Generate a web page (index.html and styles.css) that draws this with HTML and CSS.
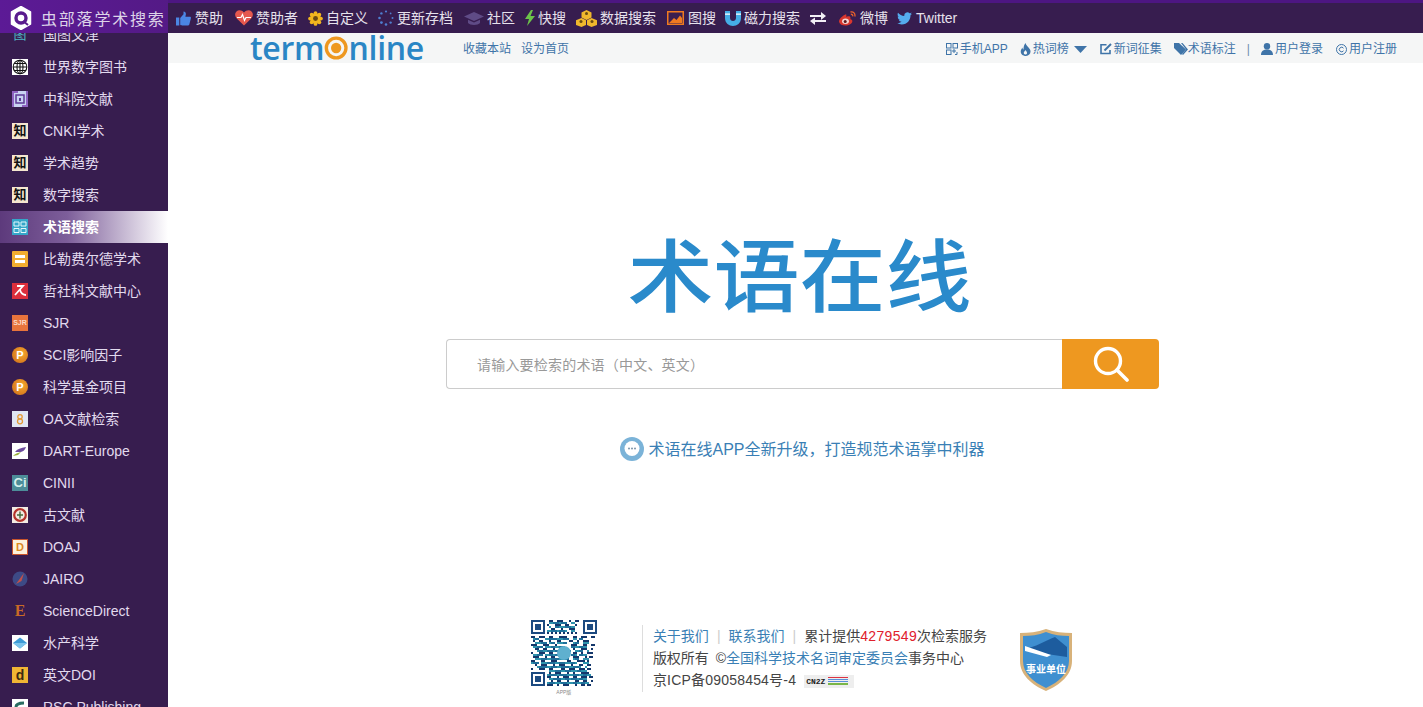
FILE: index.html
```html
<!DOCTYPE html>
<html lang="zh-CN">
<head>
<meta charset="utf-8">
<title>术语在线</title>
<link rel="stylesheet" href="styles.css">
</head>
<body>
<div class="page">
  <header class="topbar">
    <a class="brand">
      <svg class="brand-logo" width="22" height="24" viewBox="0 0 22 24"><path d="M11 0.5 20.5 6v12L11 23.5 1.5 18V6z" fill="#fff" stroke="#fff" stroke-width="1.5" stroke-linejoin="round"/><circle cx="11" cy="12" r="5" fill="none" stroke="#5a1c8e" stroke-width="3.4"/><path d="M13 15l5 4" stroke="#5a1c8e" stroke-width="2"/></svg>
      <span>虫部落学术搜索</span>
    </a>
    <nav class="topnav">
      <a class="wide mr2"><svg width="15" height="15" viewBox="0 0 16 16"><path fill="#4b86e4" d="M0 7h3.500v8.500H0zM4.500 7.500 8 3.500V0.500c1.800 0 2.600 1.400 2.600 2.800L10 6h4.700c1 0 1.500.9 1.200 1.800l-1.700 6.600c-.2.700-.8 1.100-1.500 1.100H6.500c-.8 0-2-.4-2-1z"/></svg>赞助</a>
      <a><svg width="18" height="16" viewBox="0 0 18 16"><path fill="#e5584e" d="M9 15.500 1.800 8.400C-.4 6.200-.3 3 1.500 1.400 3.400-.3 6.900-.1 9 2.600 11.100-.1 14.600-.3 16.500 1.400c1.800 1.600 1.900 4.800-.3 7z"/><path fill="none" stroke="#fff" stroke-width="1.200" d="M2 7.500h4l1.500-3 2 6 1.500-3h5"/></svg>赞助者</a>
      <a><svg width="15" height="15" viewBox="0 0 16 16"><circle cx="8" cy="8" r="5.800" fill="#f2b51e"/><g fill="#f2b51e"><circle cx="8" cy="2.200" r="2"/><circle cx="8" cy="13.800" r="2"/><circle cx="2.200" cy="8" r="2"/><circle cx="13.800" cy="8" r="2"/><circle cx="3.900" cy="3.900" r="2"/><circle cx="12.100" cy="3.900" r="2"/><circle cx="3.900" cy="12.100" r="2"/><circle cx="12.100" cy="12.100" r="2"/></g><circle cx="8" cy="8" r="2.600" fill="#6b4a12"/></svg>自定义</a>
      <a class="mr1"><svg width="16" height="16" viewBox="0 0 16 16" fill="#4f7fd0"><circle cx="8" cy="1.500" r="1.100"/><circle cx="12.600" cy="3.400" r=".9"/><circle cx="14.500" cy="8" r="1"/><circle cx="12.600" cy="12.600" r="1.200"/><circle cx="8" cy="14.500" r="1.300"/><circle cx="3.400" cy="12.600" r="1.400"/><circle cx="1.500" cy="8" r="1.300"/><circle cx="3.400" cy="3.400" r="1.200"/></svg>更新存档</a>
      <a><svg width="20" height="15" viewBox="0 0 20 15" fill="#5f4b86"><path d="M10 1 20 5.500 10 10 0 5.500z"/><path d="M4 8.800V12c2 2.500 10 2.500 12 0V8.800L10 11.500z"/></svg>社区</a>
      <a><svg width="10" height="16" viewBox="0 0 10 16"><path fill="#6cc24a" d="M6 0 0 9h4l-2 7 8-10H5.500L8 0z"/></svg>快搜</a>
      <a class="mr1"><svg width="21" height="17" viewBox="0 0 21 17" fill="#f0b82d"><path d="M10.500 0 15.500 2.500V7.500L10.500 10 5.500 7.500V2.500z"/><path d="M5.500 8 10 10.300V15L5.500 17 0 15V10.300z"/><path d="M15.500 8 21 10.300V15L15.500 17 11 15V10.300z"/><g fill="#6b4c10"><circle cx="10.500" cy="3.500" r="1.500"/><circle cx="5" cy="11.500" r="1.500"/><circle cx="16" cy="11.500" r="1.500"/></g></svg>数据搜索</a>
      <a class="wide ml-1"><svg width="17" height="14" viewBox="0 0 17 14"><rect x=".75" y=".75" width="15.500" height="12.500" fill="#3a1e50" stroke="#ef7a20" stroke-width="1.500"/><path fill="#ef7a20" d="M2 12 7 7l2.500 2L13 4.500l2 2.500v5z"/></svg>图搜</a>
      <a><svg width="16" height="16" viewBox="0 0 16 16"><path fill="#45ade6" d="M0 1h5v7c0 4 6 4 6 0V1h5v7c0 10.500-16 10.500-16 0z"/><path fill="#fff" d="M0 3.500h5v1.200H0zM11 3.500h5v1.200h-5z"/></svg>磁力搜索</a>
      <a class="mr3"><svg width="16" height="13" viewBox="0 0 16 13" fill="#f2eff5"><path d="M0 3h11V0l5 4-5 4V5H0zM16 8H5V5.500L0 9l5 4v-3h11z"/></svg></a>
      <a class="wide ml-1"><svg width="17" height="15" viewBox="0 0 17 15"><path fill="#d9362e" d="M6.500 3.500C3 5-.5 8.500.1 11c.7 3 5 4.200 8.800 3.200 3.500-.9 5.100-3.200 4.200-5-.4-.8-1.300-1-1.800-1.300.5-1.400 0-2.700-1.800-2.600-1 .1-1.900.5-2.300.5.500-1.700-.2-3-.7-2.300z"/><ellipse cx="6.500" cy="10.200" rx="3.400" ry="2.700" fill="#f3d6d4"/><circle cx="6.200" cy="10.400" r="1.500" fill="#5a1a20"/><path fill="none" stroke="#e8612d" stroke-width="1.300" d="M11.500 1c3-.8 5 1.800 4.300 4.500M11.800 3.300c1.300-.3 2.200.8 1.900 2"/></svg>微博</a>
      <a class="wide ml-1"><svg width="15" height="13" viewBox="0 0 24 20"><path fill="#55acee" transform="translate(0 -2.200)" d="M23.953 4.570a10 10 0 01-2.825.775 4.958 4.958 0 002.163-2.723c-.951.555-2.005.959-3.127 1.184a4.920 4.920 0 00-8.384 4.482C7.690 8.095 4.067 6.130 1.640 3.162a4.822 4.822 0 00-.666 2.475c0 1.710.870 3.213 2.188 4.096a4.904 4.904 0 01-2.228-.616v.060a4.923 4.923 0 003.946 4.827 4.996 4.996 0 01-2.212.085 4.936 4.936 0 004.604 3.417 9.867 9.867 0 01-6.102 2.105c-.390 0-.779-.023-1.170-.067a13.995 13.995 0 007.557 2.209c9.053 0 13.998-7.496 13.998-13.985 0-.210 0-.420-.015-.630A9.935 9.935 0 0024 4.590z"/></svg>Twitter</a>
    </nav>
  </header>

  <div class="body-row">
    <aside class="sidebar">
      <ul class="side-list">
        <li><span class="ico ico-nlc">图</span>国图文津</li>
        <li><svg class="ico" viewBox="0 0 16 16"><rect width="16" height="16" fill="#fff"/><g fill="none" stroke="#111" stroke-width="1.100"><circle cx="8" cy="8" r="6.800"/><ellipse cx="8" cy="8" rx="3" ry="6.800"/><path d="M1.200 8h13.600M2.200 4.500h11.600M2.200 11.500h11.600M8 1.200v13.600"/></g></svg>世界数字图书</li>
        <li><svg class="ico" viewBox="0 0 16 16"><rect width="16" height="16" fill="#c9d3f2"/><path fill="#8f63c2" d="M0 0h6v2H2v14H0zM16 16h-6v-2h4V0h2z"/><rect x="4" y="4" width="8" height="8" fill="none" stroke="#5d3a96" stroke-width="1.500"/><rect x="7" y="7" width="2" height="3" fill="#5d3a96"/></svg>中科院文献</li>
        <li><span class="ico ico-zhi">知</span>CNKI学术</li>
        <li><span class="ico ico-zhi">知</span>学术趋势</li>
        <li><span class="ico ico-zhi">知</span>数字搜索</li>
        <li class="active"><svg class="ico" viewBox="0 0 16 16"><rect width="16" height="16" fill="#35a6c9"/><g fill="none" stroke="#e4f6fb" stroke-width="1"><path d="M2 3h5v4H2zM9 3h5v4H9zM2 9.500h5v4H2zM9 9.500h5v4H9z"/></g></svg>术语搜索</li>
        <li><svg class="ico" viewBox="0 0 16 16"><rect width="16" height="16" rx="1" fill="#f2ad2f"/><rect x="3" y="4" width="10" height="3" fill="#fff"/><rect x="3" y="9" width="10" height="3" fill="#fff"/></svg>比勒费尔德学术</li>
        <li><svg class="ico" viewBox="0 0 16 16"><rect width="16" height="16" fill="#dc2f3c"/><path fill="none" stroke="#fff" stroke-width="1.800" d="M5 3h6L3 12M8 7c1 3 3 5 6 5"/></svg>哲社科文献中心</li>
        <li><span class="ico ico-sjr">SJR</span>SJR</li>
        <li><span class="ico ico-p">P</span>SCI影响因子</li>
        <li><span class="ico ico-p">P</span>科学基金项目</li>
        <li><svg class="ico" viewBox="0 0 16 16"><rect width="16" height="16" fill="#dfe6f3"/><circle cx="8" cy="5.800" r="2.200" fill="none" stroke="#e49a35" stroke-width="1.300"/><circle cx="8" cy="10.300" r="2.500" fill="none" stroke="#e49a35" stroke-width="1.300"/></svg>OA文献检索</li>
        <li><svg class="ico" viewBox="0 0 16 16"><rect width="16" height="16" fill="#fff"/><path fill="#6b4a9c" d="M3 9c2-3 6-4 11-5-1 3-3 5-7 5z"/><path fill="#9ab03a" d="M1 13c3-3 5-3 8-4l-3 3z"/></svg>DART-Europe</li>
        <li><span class="ico ico-ci">Ci</span>CINII</li>
        <li><svg class="ico" viewBox="0 0 16 16"><rect width="16" height="16" fill="#f3ece2"/><circle cx="8" cy="8" r="5.800" fill="none" stroke="#b5342c" stroke-width="2.200"/><path d="M8 4.500v7M5 8h6" stroke="#46683c" stroke-width="1.400"/></svg>古文献</li>
        <li><span class="ico ico-doaj">D</span>DOAJ</li>
        <li><svg class="ico" viewBox="0 0 16 16"><circle cx="8" cy="8" r="7.500" fill="#3d4a86"/><path d="M4 13 12 2 9.500 10z" fill="#c2504a"/></svg>JAIRO</li>
        <li><span class="ico ico-e">E</span>ScienceDirect</li>
        <li><svg class="ico" viewBox="0 0 16 16"><rect width="16" height="16" fill="#fff"/><path fill="#3d9ad6" d="M8 2.500 15 8l-7 5.500L1 8z"/><path fill="#7cc3ec" d="M1 8h14l-7 5.500z"/></svg>水产科学</li>
        <li><span class="ico ico-d">d</span>英文DOI</li>
        <li><svg class="ico" viewBox="0 0 16 16"><rect width="16" height="16" fill="#fff"/><path fill="none" stroke="#2b6d62" stroke-width="3" d="M4 13V8c0-3 3-4 8-4"/></svg>RSC Publishing</li>
      </ul>
    </aside>

    <main class="main">
      <div class="subbar">
        <a class="term-logo">term<svg width="26" height="26" viewBox="0 0 26 26"><circle cx="13" cy="13" r="10.500" fill="none" stroke="#ee9820" stroke-width="3.600"/><circle cx="13" cy="13" r="5.500" fill="#ee9820"/></svg>nline</a>
        <div class="sub-links">
          <a>收藏本站</a>
          <a>设为首页</a>
        </div>
        <div class="sub-right">
          <a><svg width="12" height="12" viewBox="0 0 12 12" fill="none" stroke="#3f74a8"><rect x=".5" y=".5" width="4.500" height="4.500"/><rect x="7" y=".5" width="4.500" height="4.500"/><rect x=".5" y="7" width="4.500" height="4.500"/><path d="M7 7h2v2H7zM11 9v2.500H9"/></svg>手机APP</a>
          <a><svg width="11" height="13" viewBox="0 0 11 13" fill="#3f74a8"><path d="M5.500 0c.5 3 3 3.500 4.500 6.500 1.500 3-.5 6.500-4 6.500-4 0-6-3-5-6 .3-1 1-1.800 1.500-2.500 0 1 .4 1.800 1 2C3.500 4 4 2 5.500 0z"/><path fill="#f5f6f6" d="M5.500 7c.5 1.200 1.800 1.700 1.500 3.200-.2 1-1 1.400-1.700 1.400-1 0-1.700-.9-1.500-2 .1-1 1.300-1.400 1.700-2.600z"/></svg>热词榜<svg class="caret" width="13" height="7" viewBox="0 0 13 7"><path fill="#3f74a8" d="M0 0h13L6.500 7z"/></svg></a>
          <a><svg width="12" height="12" viewBox="0 0 12 12" fill="none" stroke="#3f74a8" stroke-width="1.600"><path d="M10 7v3.500H1V1.800h5.500"/><path d="M4.500 7.500 11 1" stroke-width="2"/></svg>新词征集</a>
          <a class="tight"><svg width="14" height="12" viewBox="0 0 14 12" fill="#3f74a8"><path d="M0 0h5l7 6.500L7 12 0 5z"/><path d="M7 0h1.500l5.500 6.500L9 12l-1-1 4-4.500z"/></svg>术语标注</a>
          <span class="sep">|</span>
          <a class="mr1"><svg width="12" height="12" viewBox="0 0 12 12" fill="#3f74a8"><circle cx="6" cy="3.200" r="3.200"/><path d="M0 12c0-4 2.500-5.500 6-5.500S12 8 12 12z"/></svg>用户登录</a>
          <a><svg width="11" height="11" viewBox="0 0 11 11" fill="none" stroke="#3f74a8"><circle cx="5.500" cy="5.500" r="5"/><path d="M7.500 4.200a2.300 2.300 0 1 0 0 2.600"/></svg>用户注册</a>
        </div>
      </div>

      <div class="center">
        <h1 class="big-logo">术语在线</h1>
        <form class="search">
          <div class="search-input">请输入要检索的术语（中文、英文）</div>
          <div class="search-btn"><svg width="36" height="36" viewBox="0 0 36 36" fill="none" stroke="#fff"><circle cx="15" cy="15" r="12.500" stroke-width="3.400"/><path d="M24 24l10 10" stroke-width="3.600" stroke-linecap="round"/></svg></div>
        </form>
        <a class="app-line"><svg width="24" height="24" viewBox="0 0 24 24"><circle cx="12" cy="12" r="12" fill="#7bb3d8"/><circle cx="12" cy="11.500" r="7.500" fill="#fff"/><g fill="#7b93a8"><circle cx="9" cy="11.500" r="1"/><circle cx="12" cy="11.500" r="1"/><circle cx="15" cy="11.500" r="1"/></g></svg><span class="app-text">术语在线APP全新升级，打造规范术语掌中利器</span></a>

        <footer class="footer">
          <div class="qr">
            <svg width="66" height="66" viewBox="0 0 33 33" shape-rendering="crispEdges">
              <g fill="none" stroke="#1c4a80"><rect x=".5" y=".5" width="6" height="6"/><rect x="26.500" y=".5" width="6" height="6"/><rect x=".5" y="26.500" width="6" height="6"/></g>
              <g fill="#1c4a80"><rect x="2" y="2" width="3" height="3"/><rect x="28" y="2" width="3" height="3"/><rect x="2" y="28" width="3" height="3"/></g>
              <path fill="none" stroke="#14376b" d="M9 .5h2m2 0h3m3 0h1m2 0h2M8 2.500h1m3 0h3m2 0h2m3 0h1M10 4.500h2m3 0h1m3 0h3M8 6.500h1m1 0h1m1 0h1m1 0h1m1 0h1m1 0h1m1 0h1m1 0h1M0 8.500h2m2 0h3m2 0h2m3 0h4m3 0h2m2 0h3m2 0h2M1 10.500h1m2 0h2m3 0h1m3 0h2m4 0h2m2 0h1m2 0h3M0 12.500h3m3 0h3m3 0h1m7 0h3m3 0h2m2 0h2M2 14.500h2m2 0h2m3 0h1m9 0h1m3 0h3m2 0h1M0 16.500h1m3 0h3m2 0h2m10 0h2m2 0h1m2 0h3M1 18.500h3m3 0h1m2 0h2m9 0h3m3 0h1m1 0h2M0 20.500h2m3 0h2m3 0h3m5 0h2m3 0h4m1 0h1M2 22.500h1m2 0h3m3 0h1m2 0h3m3 0h1m3 0h2m2 0h2M0 24.500h1m3 0h3m2 0h2m4 0h2m2 0h3m2 0h3m1 0h2M9 26.500h1m2 0h3m3 0h1m2 0h1m3 0h4M8 28.500h2m3 0h1m2 0h3m2 0h2m2 0h3m1 0h2M10 30.500h1m2 0h2m3 0h1m3 0h2m2 0h2m2 0h1M8 32.500h3m2 0h1m2 0h3m3 0h1m2 0h2m1 0h2"/>
              <path fill="none" stroke="#2f93ad" d="M9 1.500h2m3 0h1m5 0h2M9 3.500h1m4 0h3m3 0h2M8 5.500h2m3 0h1m3 0h1m2 0h2M1 9.500h1m5 0h2m4 0h3m5 0h2m2 0h1M2 11.500h3m4 0h1m3 0h3m5 0h3m2 0h3M1 13.500h2m4 0h3m2 0h2m8 0h2m2 0h2M3 15.500h1m2 0h2m3 0h1m10 0h3m3 0h1M1 17.500h2m4 0h2m2 0h1m10 0h1m3 0h2M2 19.500h3m3 0h2m4 0h2m5 0h3m2 0h3M0 21.500h1m4 0h3m4 0h2m3 0h3m2 0h1m3 0h3M3 23.500h1m4 0h2m3 0h2m4 0h2m3 0h1m2 0h1M9 25.500h3m3 0h2m3 0h3m2 0h3M8 27.500h1m4 0h1m4 0h3m3 0h2m2 0h2M9 29.500h2m4 0h2m2 0h1m3 0h1m2 0h2M8 31.500h1m3 0h3m3 0h3m2 0h2m2 0h2"/>
              <path fill="none" stroke="#1f6f9a" d="M11 1.500h3m1 0h3M12 3.500h2m3 0h3M10 5.500h3m1 0h3M2 9.500h2m5 0h4m3 0h3m5 0h2M5 11.500h3m2 0h2m4 0h2m4 0h2M3 13.500h3m4 0h2m2 0h3m3 0h2m2 0h2M4 15.500h2m2 0h3m1 0h2m4 0h2m4 0h2M3 17.500h3m3 0h2m1 0h2m6 0h2m2 0h2M5 19.500h3m2 0h4m2 0h3m3 0h2M1 21.500h3m4 0h4m2 0h3m3 0h2M4 23.500h4m2 0h3m2 0h4m2 0h3M12 25.500h3m2 0h3m3 0h2M9 27.500h4m1 0h4m3 0h3m2 0h2M11 29.500h4m2 0h2m1 0h3m1 0h2M9 31.500h3m3 0h3m3 0h2m2 0h2"/>
              <circle cx="16.500" cy="16.500" r="3.500" fill="#5fb0cf" shape-rendering="auto"/>
            </svg>
            <div class="qr-cap">APP版</div>
          </div>
          <div class="foot-text">
            <p><a>关于我们</a><span class="pipe">|</span><a>联系我们</a><span class="pipe">|</span>累计提供<em>4279549</em>次检索服务</p>
            <p class="spaced">版权所有 ©<a>全国科学技术名词审定委员会</a>事务中心</p>
            <p><span class="icp">京ICP备09058454号-4</span><span class="cnzz"><b>CN2Z</b><svg width="20" height="9" viewBox="0 0 20 9" shape-rendering="crispEdges"><rect y="0" width="20" height="1" fill="#d34"/><rect y="2" width="20" height="1" fill="#5a8fd8"/><rect y="4" width="20" height="1" fill="#5a8fd8"/><rect y="6" width="20" height="2" fill="#7ab648"/></svg></span></p>
          </div>
          <svg class="badge" width="52" height="62" viewBox="0 0 52 62"><path fill="#d8b27a" d="M26 0c9 3 17 4 26 4v28c0 14-12 24-26 30C12 56 0 46 0 32V4c9 0 17-1 26-4z"/><path fill="#3f8fd0" d="M26 3c8 3 15 4 23 4v25c0 12-10 21-23 27C13 53 3 44 3 32V7c8 0 15-1 23-4z"/><path fill="#1d5c9e" d="M5 20c10-2 20-8 30-12l12 10v10L20 24z"/><path fill="#fff" d="M5 17l26 9-4 2L5 22z"/><text x="26" y="44" class="badge-text">事业单位</text></svg>
        </footer>
      </div>
    </main>
  </div>
</div>
</body>
</html>
```

FILE: styles.css
```css
* { box-sizing: border-box; }
html, body { margin: 0; padding: 0; }
body {
  font-family: "Liberation Sans", "Noto Sans CJK SC", sans-serif;
  font-size: 14px;
  color: #333;
  background: #fff;
}
a { color: inherit; text-decoration: none; }
ul { list-style: none; margin: 0; padding: 0; }
p { margin: 0; }
em { font-style: normal; color: #e0202c; letter-spacing: .35px; }

.page { width: 1423px; height: 707px; overflow: hidden; display: flex; flex-direction: column; }

.topbar {
  height: 33px; flex: none;
  display: flex;
  background: #371d4f;
  border-top: 3px solid #4d1682;
  color: #e6e1ec;
}
.brand {
  width: 168px; height: 33px; margin-top: -3px; flex: none;
  display: flex; align-items: center; gap: 9px; padding: 3px 0 0 10px;
  background: linear-gradient(90deg, #5c1a96, #541a86);
  color: #ddd3e8;
  font-size: 16px; letter-spacing: 1.8px; white-space: nowrap;
}
.brand-logo { flex: none; }
.topnav { display: flex; align-items: center; padding-left: 8px; gap: 10px; white-space: nowrap; line-height: 20px; }
.topnav a { display: flex; align-items: center; gap: 3px; }
.topnav .wide { gap: 4px; }
.mr1 { margin-right: 1px; }
.mr2 { margin-right: 2px; }
.mr3 { margin-right: 3px; }
.ml-1 { margin-right: -1px; }

.body-row { flex: 1; display: flex; min-height: 0; }

.sidebar { width: 168px; flex: none; background: #371d4f; overflow: hidden; }
.side-list { margin-top: -14px; }
.side-list li {
  height: 32px; display: flex; align-items: center; gap: 15px;
  padding-left: 12px; color: #e2daee; white-space: nowrap; line-height: 32px;
}
.side-list li.active {
  background: linear-gradient(90deg, #5d3a7c 0%, #7d5e9a 40%, #fff 100%);
  color: #fff; font-weight: bold;
}
.ico {
  width: 16px; height: 16px; flex: none;
  display: flex; align-items: center; justify-content: center;
  font-size: 12px; line-height: 16px; font-weight: normal; overflow: hidden;
}
.ico-nlc { color: #4fb7c4; font-size: 13px; }
.ico-zhi { background: #f5e6cf; color: #111; font-weight: bold; font-size: 13px; }
.ico-sjr { background: #e8743c; color: #fbd9c6; font-size: 7px; font-weight: bold; }
.ico-p { border-radius: 50%; background: radial-gradient(circle at 60% 40%, #f8a92c, #c8681a); color: #fff; font-weight: bold; font-size: 11px; }
.ico-ci { background: #4d8d99; color: #d8f2ee; font-weight: bold; font-size: 13px; }
.ico-doaj { background: #fdf2dc; border: 1px solid #c9552c; color: #dd8a1f; font-weight: bold; font-size: 11px; }
.ico-e { color: #c96a26; font-family: "Liberation Serif", serif; font-size: 16px; font-weight: bold; }
.ico-d { background: #f0b534; color: #3c2a10; font-weight: bold; font-size: 14px; }

.main { flex: 1; min-width: 0; display: flex; flex-direction: column; }

.subbar {
  height: 30px; flex: none;
  display: flex; align-items: center;
  padding: 0 26px 0 82px;
  background: #f5f6f6;
  font-size: 12px; color: #3f74a8; line-height: 16px;
  white-space: nowrap;
}
.term-logo {
  display: flex; align-items: center; width: 174px; margin-top: -1px;
  font-family: "Open Sans", sans-serif; font-size: 32px; font-weight: 600; letter-spacing: -.3px;
  color: #2a86c5; line-height: 30px;
}
.sub-links { display: flex; gap: 10px; margin-left: 39px; padding-top: 2px; }
.sub-right { margin-left: auto; display: flex; align-items: center; gap: 12px; padding-top: 2px; }
.sub-right a { display: flex; align-items: center; gap: 2px; }
.sub-right .tight { gap: 0; }
.caret { margin: 0 1px 0 3px; }
.sep { margin: 0 -1px; color: #6d8fb0; }

.center { display: flex; flex-direction: column; align-items: center; padding-left: 14px; }

.big-logo {
  margin: 177px 6px 0 0;
  height: 76px; line-height: 76px;
  font-size: 86px; font-weight: 500; color: #2a8acb;
  white-space: nowrap;
  transform: scaleY(.92);
}
.search {
  margin: 23px 0 0;
  width: 713px; height: 50px; display: flex;
}
.search-input {
  flex: 1;
  border: 1px solid #ccc; border-right: 0; border-radius: 4px 0 0 4px;
  padding: 1px 0 0 30px; line-height: 48px;
  font-size: 14px; color: #999; letter-spacing: .2px;
}
.search-btn {
  width: 97px; flex: none;
  display: flex; align-items: center; justify-content: center;
  background: #ee9820; border-radius: 0 4px 4px 0;
}
.app-line {
  margin-top: 48px; height: 24px;
  display: flex; align-items: center; gap: 4px;
  font-size: 16px; line-height: 22px; color: #3a7fb5; white-space: nowrap;
}
.app-text { padding-top: 2px; }

.footer { margin-top: 159px; padding-right: 2px; display: flex; align-items: flex-start; }
.qr { width: 66px; flex: none; text-align: center; }
.qr svg { display: block; }
.qr-cap { font-size: 5px; line-height: 12px; color: #888; }
.foot-text {
  margin: 5px 0 0 45px;
  height: 67px; padding-left: 10px;
  border-left: 1px solid #ddd;
  font-size: 14px; line-height: 22px; color: #444; white-space: nowrap;
}
.foot-text a { color: #3a7fb5; }
.pipe { margin: 0 8px; color: #ccc; }
.spaced { word-spacing: 3px; }
.icp { letter-spacing: .2px; }
.cnzz {
  display: inline-flex; align-items: center; gap: 3px;
  margin-left: 8px; padding: 0 1px 0 2px; height: 13px; width: 50px;
  background: #eee; vertical-align: 1px;
}
.cnzz b { font-family: "Liberation Mono", monospace; font-size: 8px; line-height: 13px; color: #222; }
.badge { margin: 9px 0 0 33px; flex: none; }
.badge-text { font-size: 10px; font-weight: bold; fill: #fff; text-anchor: middle; }
```
